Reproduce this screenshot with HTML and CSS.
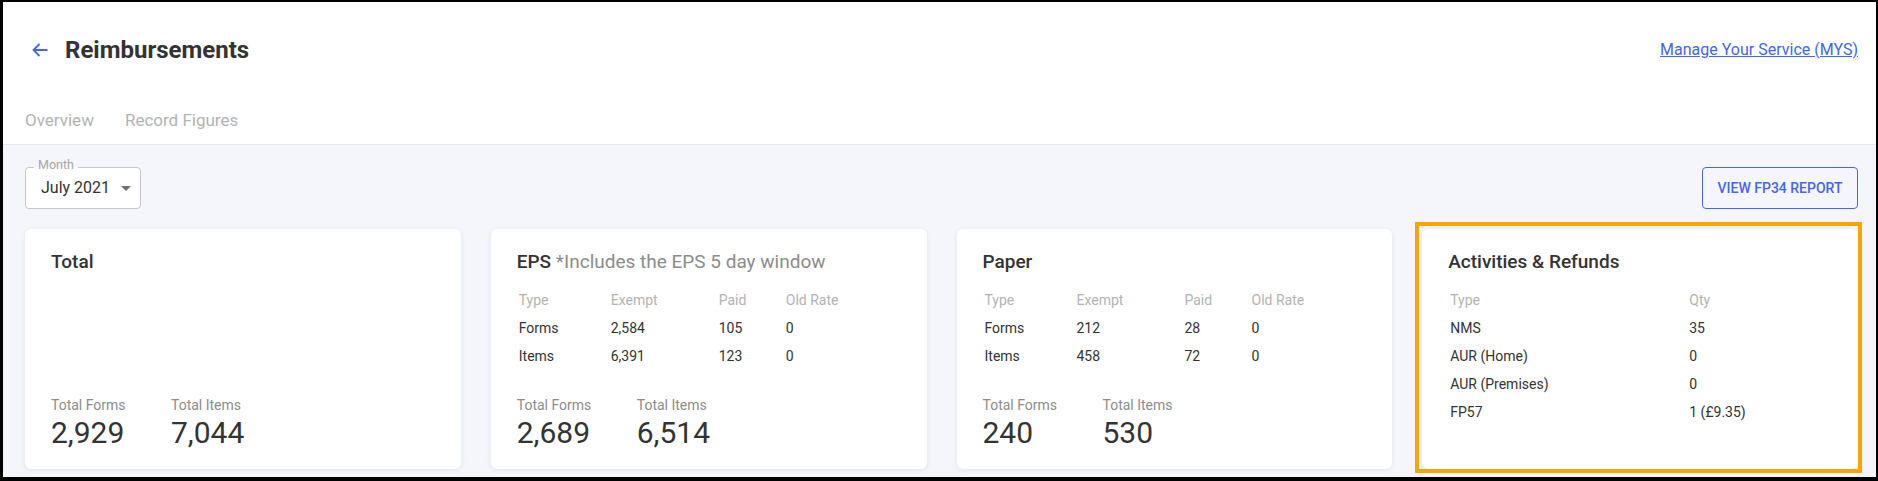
FILE: index.html
```html
<!DOCTYPE html>
<html lang="en">
<head>
<meta charset="utf-8">
<title>Reimbursements</title>
<link rel="stylesheet" href="styles.css">
</head>
<body>
<div class="frame">
  <header class="header">
    <div class="title-row">
      <div class="title-left">
        <svg class="back" width="16" height="14" viewBox="0 0 16 14" aria-hidden="true">
          <path d="M15.5 7H1.5M7.5 1L1.5 7L7.5 13" fill="none" stroke="currentColor" stroke-width="1.8"/>
        </svg>
        <h1 class="title">Reimbursements</h1>
      </div>
      <a class="mys-link" href="#">Manage Your Service (MYS)</a>
    </div>
    <nav class="tabs">
      <span class="tab">Overview</span>
      <span class="tab">Record Figures</span>
    </nav>
  </header>

  <main class="main">
    <div class="toolbar">
      <div class="select">
        <span class="select-label">Month</span>
        <span class="select-value">July 2021</span>
        <span class="caret"></span>
      </div>
      <button class="btn-outline">View FP34 Report</button>
    </div>

    <div class="cards">
      <section class="card">
        <h2 class="card-title">Total</h2>
        <div class="stats">
          <div class="stat"><div class="stat-label">Total Forms</div><div class="stat-value">2,929</div></div>
          <div class="stat"><div class="stat-label">Total Items</div><div class="stat-value">7,044</div></div>
        </div>
      </section>

      <section class="card">
        <h2 class="card-title">EPS <span class="note">*Includes the EPS 5 day window</span></h2>
        <div class="tbl">
          <div class="th">Type</div><div class="th">Exempt</div><div class="th">Paid</div><div class="th">Old Rate</div>
          <div class="td">Forms</div><div class="td">2,584</div><div class="td">105</div><div class="td">0</div>
          <div class="td">Items</div><div class="td">6,391</div><div class="td">123</div><div class="td">0</div>
        </div>
        <div class="stats">
          <div class="stat"><div class="stat-label">Total Forms</div><div class="stat-value">2,689</div></div>
          <div class="stat"><div class="stat-label">Total Items</div><div class="stat-value">6,514</div></div>
        </div>
      </section>

      <section class="card">
        <h2 class="card-title">Paper</h2>
        <div class="tbl">
          <div class="th">Type</div><div class="th">Exempt</div><div class="th">Paid</div><div class="th">Old Rate</div>
          <div class="td">Forms</div><div class="td">212</div><div class="td">28</div><div class="td">0</div>
          <div class="td">Items</div><div class="td">458</div><div class="td">72</div><div class="td">0</div>
        </div>
        <div class="stats">
          <div class="stat"><div class="stat-label">Total Forms</div><div class="stat-value">240</div></div>
          <div class="stat"><div class="stat-label">Total Items</div><div class="stat-value">530</div></div>
        </div>
      </section>

      <section class="card card-highlight">
        <h2 class="card-title">Activities &amp; Refunds</h2>
        <div class="tbl tbl-2">
          <div class="th">Type</div><div class="th">Qty</div>
          <div class="td">NMS</div><div class="td">35</div>
          <div class="td">AUR (Home)</div><div class="td">0</div>
          <div class="td">AUR (Premises)</div><div class="td">0</div>
          <div class="td">FP57</div><div class="td">1 (£9.35)</div>
        </div>
      </section>
    </div>
  </main>
</div>
</body>
</html>
```

FILE: styles.css
```css
* { box-sizing: border-box; }

html, body {
  margin: 0;
  padding: 0;
  background: #000;
}

body {
  font-family: Roboto, "Liberation Sans", Arial, sans-serif;
  color: #333;
}

.frame {
  height: 481px;
  border-style: solid;
  border-color: #000;
  border-width: 2px 2px 4px 3px;
  background: #f4f6fb;
  display: flex;
  flex-direction: column;
  overflow: hidden;
}

/* Header */
.header {
  background: #fff;
  border-bottom: 1px solid #e4e8ef;
  padding: 32px 18px 0 22px;
}

.title-row {
  display: flex;
  align-items: center;
  justify-content: space-between;
  height: 32px;
}

.title-left {
  display: flex;
  align-items: center;
  padding-left: 7px;
}

.back {
  color: #4466ee;
  margin-right: 17px;
  display: block;
}

.title {
  margin: 0;
  font-size: 24px;
  line-height: 32px;
  font-weight: 700;
  color: #333;
}

.mys-link {
  font-size: 16px;
  line-height: 24px;
  color: #4466ee;
  text-decoration: underline;
}

.tabs {
  display: flex;
  gap: 31px;
  margin-top: 30px;
}

.tab {
  font-size: 17px;
  line-height: 24px;
  padding: 12px 0;
  color: #b3b3b3;
}

/* Main */
.main {
  flex: 1;
  padding: 22px 18px 0 22px;
}

.toolbar {
  display: flex;
  justify-content: space-between;
  align-items: flex-start;
}

.select {
  position: relative;
  width: 116px;
  height: 42px;
  border: 1px solid #c6c6c6;
  border-radius: 4px;
  background: #fff;
  display: flex;
  align-items: center;
  padding-left: 15px;
}

.select-label {
  position: absolute;
  top: -10px;
  left: 8px;
  padding: 0 4px;
  font-size: 12.5px;
  line-height: 14px;
  color: #a8a8a8;
  background: linear-gradient(#f4f6fb 9px, #fff 9px);
}

.select-value {
  font-size: 16px;
  line-height: 24px;
  color: #333;
}

.caret {
  margin-left: 11px;
  width: 0;
  height: 0;
  border-left: 5px solid transparent;
  border-right: 5px solid transparent;
  border-top: 5px solid #707070;
}

.btn-outline {
  width: 156px;
  height: 42px;
  border: 1px solid #4466ee;
  border-radius: 4px;
  background: transparent;
  color: #4466ee;
  font-family: inherit;
  font-size: 14px;
  font-weight: 500;
  text-transform: uppercase;
  letter-spacing: 0;
  padding: 0;
}

.cards {
  display: grid;
  grid-template-columns: repeat(4, 1fr);
  gap: 30px;
  margin-top: 20px;
}

.card {
  position: relative;
  background: #fff;
  border-radius: 6px;
  box-shadow: 0 1px 5px rgba(40, 60, 110, 0.10);
  min-height: 240px;
  padding: 21px 26px 18px;
  display: flex;
  flex-direction: column;
}

.card-highlight::after {
  content: "";
  position: absolute;
  left: -7px;
  top: -7px;
  right: -4px;
  bottom: -4px;
  border: 4px solid #f7a600;
  pointer-events: none;
}

.card-title {
  margin: 0;
  font-size: 19px;
  line-height: 24px;
  font-weight: 500;
  color: #333;
}

.note {
  font-weight: 400;
  color: #8c8c8c;
}

.tbl {
  display: grid;
  grid-template-columns: 92px 108px 67px auto;
  margin-top: 12px;
  padding-left: 2px;
  font-size: 14px;
  line-height: 28px;
}

.tbl-2 {
  grid-template-columns: 239px auto;
}

.th {
  color: #b3b3b3;
}

.td {
  color: #333;
}

.stats {
  display: flex;
  margin-top: auto;
}

.stat {
  width: 120px;
}

.stat-label {
  font-size: 14px;
  line-height: 20px;
  color: #8c8c8c;
}

.stat-value {
  font-size: 30px;
  line-height: 36px;
  color: #333;
}
```
